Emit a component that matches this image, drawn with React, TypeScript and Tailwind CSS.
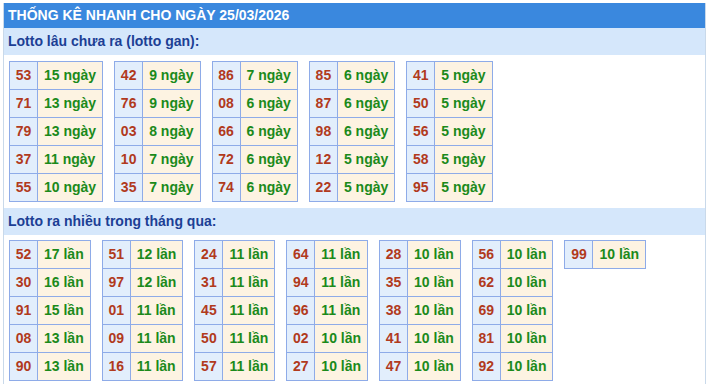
import React from "react";

type Row = [string, string];

const gan: Row[][] = [
  [["53", "15"], ["71", "13"], ["79", "13"], ["37", "11"], ["55", "10"]],
  [["42", "9"], ["76", "9"], ["03", "8"], ["10", "7"], ["35", "7"]],
  [["86", "7"], ["08", "6"], ["66", "6"], ["72", "6"], ["74", "6"]],
  [["85", "6"], ["87", "6"], ["98", "6"], ["12", "5"], ["22", "5"]],
  [["41", "5"], ["50", "5"], ["56", "5"], ["58", "5"], ["95", "5"]],
];

const nhieu: Row[][] = [
  [["52", "17"], ["30", "16"], ["91", "15"], ["08", "13"], ["90", "13"]],
  [["51", "12"], ["97", "12"], ["01", "11"], ["09", "11"], ["16", "11"]],
  [["24", "11"], ["31", "11"], ["45", "11"], ["50", "11"], ["57", "11"]],
  [["64", "11"], ["94", "11"], ["96", "11"], ["02", "10"], ["27", "10"]],
  [["28", "10"], ["35", "10"], ["38", "10"], ["41", "10"], ["47", "10"]],
  [["56", "10"], ["62", "10"], ["69", "10"], ["81", "10"], ["92", "10"]],
  [["99", "10"]],
];

function Table({ rows, unit }: { rows: Row[]; unit: string }) {
  return (
    <div className="grid grid-cols-[auto_auto] border-r border-b border-[#8eabe8]">
      {rows.map(([n, v], i) => (
        <React.Fragment key={i}>
          <div className="w-[28px] h-[28px] border-l border-t border-[#8eabe8] bg-[#e2eefc] text-[#b13a1d] flex items-center justify-center">
            {n}
          </div>
          <div className="h-[28px] border-l border-t border-[#8eabe8] bg-[#fdf3e2] text-[#1b8a1b] flex items-center px-[6px]">
            {v} {unit}
          </div>
        </React.Fragment>
      ))}
    </div>
  );
}

export default function App() {
  return (
    <div
      className="pt-[3px] pl-[3px] bg-white"
      style={{ fontFamily: '"Liberation Sans", Arial, sans-serif' }}
    >
      <div className="w-[703px] border-l border-r border-[#c9d9ea] font-bold text-[14px]">
        <div className="h-[25px] bg-[#3a88de] text-white flex items-center pl-[4px]">
          THỐNG KÊ NHANH CHO NGÀY 25/03/2026
        </div>
        <div className="h-[27px] bg-[#d5e7fb] text-[#1c3f95] flex items-center pl-[4px]">
          Lotto lâu chưa ra (lotto gan):
        </div>
        <div className="flex flex-wrap items-start gap-x-[11px] pl-[5px] pt-[6px] pb-[6px]">
          {gan.map((t, i) => (
            <Table key={i} rows={t} unit="ngày" />
          ))}
        </div>
        <div className="h-[27px] bg-[#d5e7fb] text-[#1c3f95] flex items-center pl-[4px]">
          Lotto ra nhiều trong tháng qua:
        </div>
        <div className="flex flex-wrap items-start gap-x-[11px] pl-[5px] pt-[5px] pb-[6px]">
          {nhieu.map((t, i) => (
            <Table key={i} rows={t} unit="lần" />
          ))}
        </div>
      </div>
    </div>
  );
}
